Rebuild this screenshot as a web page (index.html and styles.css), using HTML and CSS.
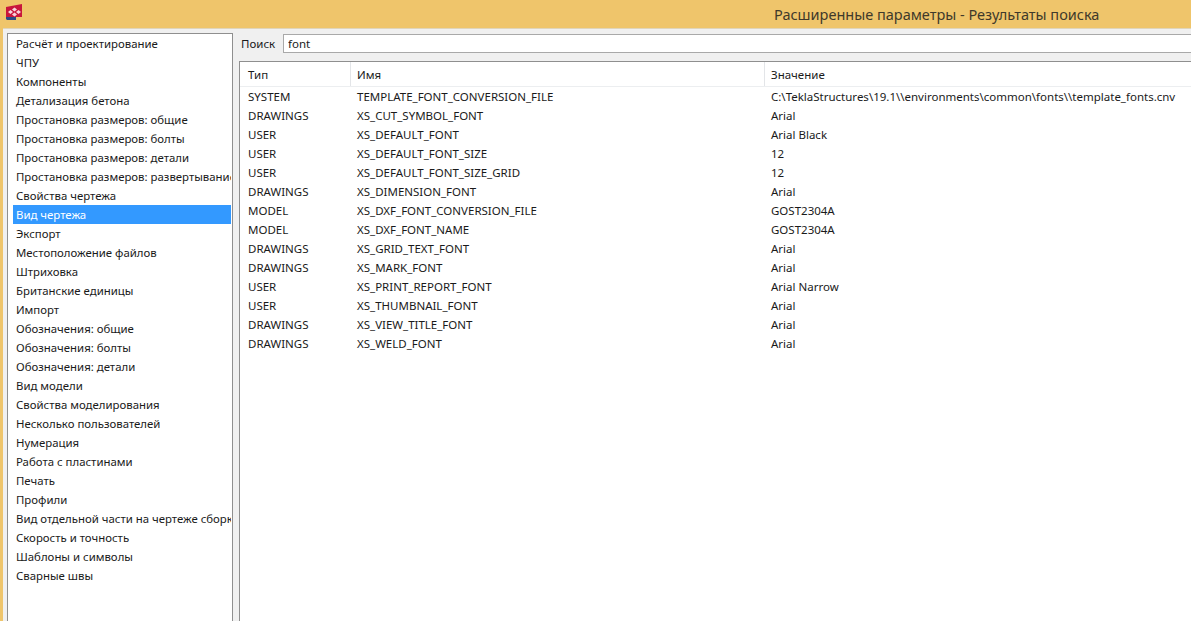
FILE: index.html
```html
<!DOCTYPE html>
<html lang="ru">
<head>
<meta charset="utf-8">
<title>Расширенные параметры - Результаты поиска</title>
<link rel="stylesheet" href="styles.css">
</head>
<body>
<div class="window">
  <header class="titlebar">
    <svg class="logo" width="17" height="17" viewBox="0 0 17 17">
      <path d="M0 3 L16 0 V13 H0 Z" fill="#c8163c"/>
      <path d="M0 13 H10 V16 H1 L0 15 Z" fill="#2b4a86"/>
      <g fill="#f8d3da">
        <path d="M2 8 L4.500 6 L7 8 L4.500 10 Z"/>
        <path d="M6 5.500 L8.500 3.500 L11 5.500 L8.500 7.500 Z"/>
        <path d="M6 10.500 L8.500 8.500 L11 10.500 L8.500 12.500 Z"/>
        <path d="M10 8 L12.500 6 L15 8 L12.500 10 Z"/>
      </g>
    </svg>
    <h1 class="title">Расширенные параметры - Результаты поиска</h1>
  </header>
  <div class="body">
    <ul class="categories">
      <li>Расчёт и проектирование</li>
      <li>ЧПУ</li>
      <li>Компоненты</li>
      <li>Детализация бетона</li>
      <li>Простановка размеров: общие</li>
      <li>Простановка размеров: болты</li>
      <li>Простановка размеров: детали</li>
      <li>Простановка размеров: развертывание</li>
      <li>Свойства чертежа</li>
      <li class="selected">Вид чертежа</li>
      <li>Экспорт</li>
      <li>Местоположение файлов</li>
      <li>Штриховка</li>
      <li>Британские единицы</li>
      <li>Импорт</li>
      <li>Обозначения: общие</li>
      <li>Обозначения: болты</li>
      <li>Обозначения: детали</li>
      <li>Вид модели</li>
      <li>Свойства моделирования</li>
      <li>Несколько пользователей</li>
      <li>Нумерация</li>
      <li>Работа с пластинами</li>
      <li>Печать</li>
      <li>Профили</li>
      <li>Вид отдельной части на чертеже сборки</li>
      <li>Скорость и точность</li>
      <li>Шаблоны и символы</li>
      <li>Сварные швы</li>
    </ul>
    <main class="content">
      <div class="search">
        <label class="search-label" for="q">Поиск</label>
        <input class="search-input" id="q" value="font">
      </div>
      <div class="results">
        <div class="row head">
          <div class="cell type">Тип</div>
          <div class="cell name">Имя</div>
          <div class="cell value">Значение</div>
        </div>
        <div class="row"><div class="cell type">SYSTEM</div><div class="cell name">TEMPLATE_FONT_CONVERSION_FILE</div><div class="cell value">C:\TeklaStructures\19.1\\environments\common\fonts\\template_fonts.cnv</div></div>
        <div class="row"><div class="cell type">DRAWINGS</div><div class="cell name">XS_CUT_SYMBOL_FONT</div><div class="cell value">Arial</div></div>
        <div class="row"><div class="cell type">USER</div><div class="cell name">XS_DEFAULT_FONT</div><div class="cell value">Arial Black</div></div>
        <div class="row"><div class="cell type">USER</div><div class="cell name">XS_DEFAULT_FONT_SIZE</div><div class="cell value">12</div></div>
        <div class="row"><div class="cell type">USER</div><div class="cell name">XS_DEFAULT_FONT_SIZE_GRID</div><div class="cell value">12</div></div>
        <div class="row"><div class="cell type">DRAWINGS</div><div class="cell name">XS_DIMENSION_FONT</div><div class="cell value">Arial</div></div>
        <div class="row"><div class="cell type">MODEL</div><div class="cell name">XS_DXF_FONT_CONVERSION_FILE</div><div class="cell value">GOST2304A</div></div>
        <div class="row"><div class="cell type">MODEL</div><div class="cell name">XS_DXF_FONT_NAME</div><div class="cell value">GOST2304A</div></div>
        <div class="row"><div class="cell type">DRAWINGS</div><div class="cell name">XS_GRID_TEXT_FONT</div><div class="cell value">Arial</div></div>
        <div class="row"><div class="cell type">DRAWINGS</div><div class="cell name">XS_MARK_FONT</div><div class="cell value">Arial</div></div>
        <div class="row"><div class="cell type">USER</div><div class="cell name">XS_PRINT_REPORT_FONT</div><div class="cell value">Arial Narrow</div></div>
        <div class="row"><div class="cell type">USER</div><div class="cell name">XS_THUMBNAIL_FONT</div><div class="cell value">Arial</div></div>
        <div class="row"><div class="cell type">DRAWINGS</div><div class="cell name">XS_VIEW_TITLE_FONT</div><div class="cell value">Arial</div></div>
        <div class="row"><div class="cell type">DRAWINGS</div><div class="cell name">XS_WELD_FONT</div><div class="cell value">Arial</div></div>
      </div>
    </main>
  </div>
</div>
</body>
</html>
```
FILE: styles.css
```css
* { box-sizing: border-box; }
html, body { margin: 0; height: 100%; overflow: hidden; }
body { font-family: "Noto Sans", "Open Sans", sans-serif; font-size: 11.500px; color: #1a1a1a; background: #f0f0f0; }
.window { height: 621px; display: flex; flex-direction: column; background: #efc56b; padding-left: 3px; }
.titlebar { height: 28px; flex: none; margin-left: -3px; padding-left: 6px; display: flex; align-items: center; position: relative; }
.logo { flex: none; margin-top: -3px; }
.title { margin: 0; position: absolute; left: 774px; top: 4px; font-size: 14.500px; line-height: 20px; font-weight: 400; color: #40392a; white-space: nowrap; }
.body { flex: 1; min-height: 0; display: flex; background: #f0f0f0; padding: 4px 0 0 4px; border-top: 1px solid #e0d5ba; }
.categories { list-style: none; margin: 0; padding: 0 1px 0 5px; width: 226px; flex: none; background: #fff; border: 1px solid #8f8f8f; border-bottom: 0; overflow: hidden; font-size: 11.400px; }
.categories li { height: 19px; line-height: 19px; padding-left: 3px; white-space: nowrap; overflow: hidden; }
.categories .selected { background: #3399ff; color: #fff; }
.content { flex: 1; min-width: 0; display: flex; flex-direction: column; padding-left: 6px; }
.search { height: 19px; margin-top: 1px; flex: none; display: flex; align-items: center; }
.search-label { width: 44px; padding-left: 2px; flex: none; }
.search-input { flex: 1; min-width: 0; height: 19px; margin: 0; padding: 0 4px; border: 1px solid #a9a9a9; border-right: 0; background: #fff; font: inherit; color: inherit; outline: 0; }
.results { flex: 1; margin-top: 8px; background: #fff; border-top: 1px solid #8f8f8f; border-left: 1px solid #8f8f8f; }
.row { display: flex; height: 19px; line-height: 19px; }
.row.head { height: 25px; line-height: 25px; border-bottom: 1px solid #eceef0; }
.cell { white-space: nowrap; overflow: hidden; padding-left: 8px; }
.type { width: 111px; flex: none; }
.name { width: 414px; flex: none; padding-left: 6px; }
.value { flex: 1; padding-left: 6px; }
.head .cell { border-right: 1px solid #e3e5e8; }
.head .value { border-right: 0; }
```
